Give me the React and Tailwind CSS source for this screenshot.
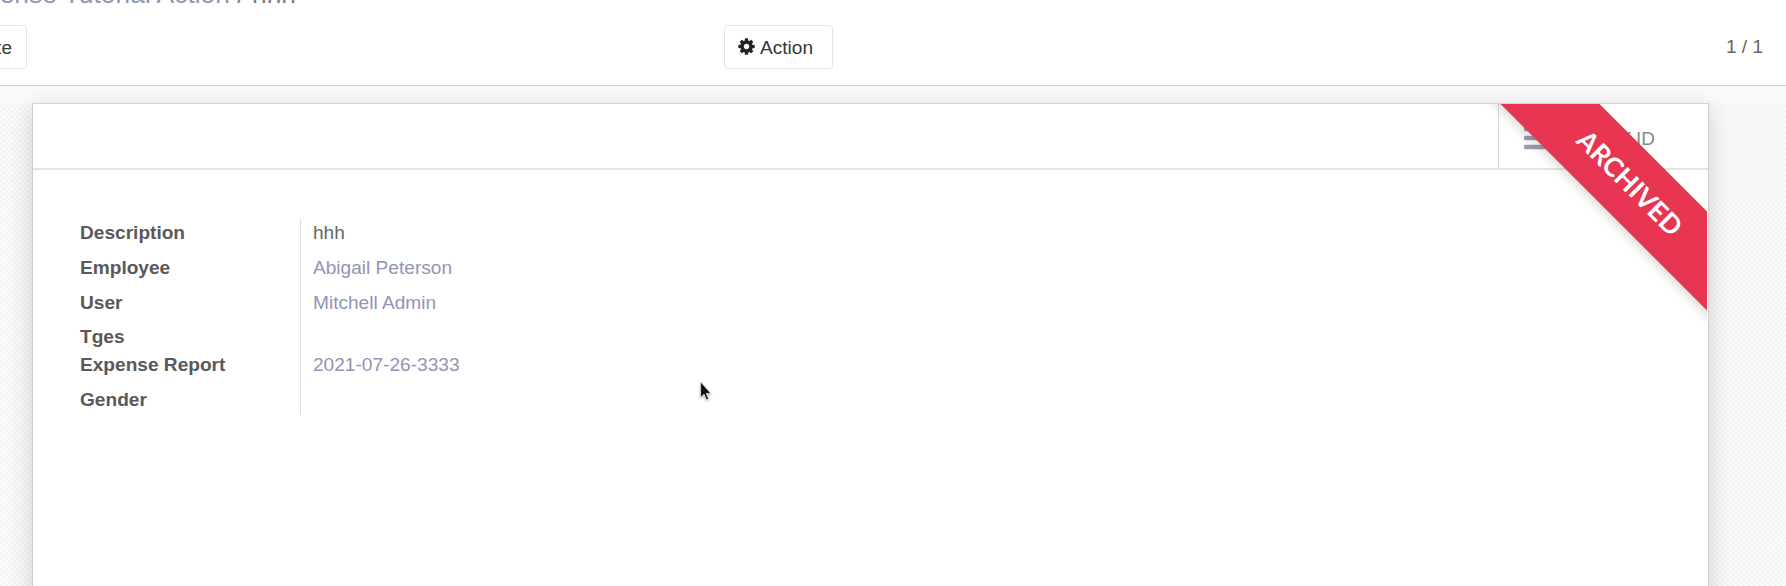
const fields = [
  { label: "Description", value: "hhh", row: "h-[35px]", tone: "text-[#666666]" },
  { label: "Employee", value: "Abigail Peterson", row: "h-[35px]", tone: "text-[#9194b4]" },
  { label: "User", value: "Mitchell Admin", row: "h-[34px]", tone: "text-[#9194b4]" },
  { label: "Tges", value: "", row: "h-[28px]", tone: "" },
  { label: "Expense Report", value: "2021-07-26-3333", row: "h-[35px]", tone: "text-[#9194b4]" },
  { label: "Gender", value: "", row: "h-[28px]", tone: "" },
];

function CogIcon() {
  return (
    <svg className="mr-[5px] size-[19px] -mt-[3px] -ml-px" viewBox="0 0 1792 1792" fill="#212529">
      <path d="M1152 896q0-106-75-181t-181-75-181 75-75 181 75 181 181 75 181-75 75-181zm512-109v222q0 12-8 23t-20 13l-185 28q-19 54-39 91 35 50 107 138 10 12 10 25t-9 23q-27 37-99 108t-94 71q-12 0-26-9l-138-108q-44 23-91 38-16 136-29 186-7 28-36 28h-222q-14 0-24.5-8.5t-11.5-21.5l-28-184q-49-16-90-37l-141 107q-10 9-25 9-14 0-25-11-126-114-165-168-7-10-7-23 0-12 8-23 15-21 51-66.5t54-70.5q-27-50-41-99l-183-27q-13-2-21-12.5t-8-23.5v-222q0-12 8-23t19-13l186-28q14-46 39-92-40-57-107-138-10-12-10-24 0-10 9-23 26-36 98.5-107.5t94.5-71.5q13 0 26 10l138 107q44-23 91-38 16-136 29-186 7-28 36-28h222q14 0 24.5 8.5t11.5 21.5l28 184q49 16 90 37l142-107q9-9 24-9 13 0 25 10 129 119 165 170 7 8 7 22 0 12-8 23-15 21-51 66.5t-54 70.5q26 50 41 98l183 28q13 2 21 12.5t8 23.5z" />
    </svg>
  );
}

function BarsIcon() {
  return (
    <svg className="mt-[4px] h-[24px] w-[24px]" viewBox="0 0 24 24" fill="#9a9cb2">
      <rect x="0" y="0.7" width="24" height="4.6" rx="1.2" />
      <rect x="0" y="9.7" width="24" height="4.6" rx="1.2" />
      <rect x="0" y="18.7" width="24" height="4.6" rx="1.2" />
    </svg>
  );
}

function ControlPanel() {
  return (
    <header className="relative z-10 h-[86px] shrink-0 overflow-hidden border-b border-[#cfcfcf] bg-white">
      <div className="-mt-[19px] flex h-[26px] w-[296px] justify-end whitespace-pre text-[26.4px] leading-[26px] text-[#9194b4]">
        <span>My Expense Tutorial Action</span>
        <span className="text-[#7d7d84]"> / hhh</span>
      </div>
      <div className="mt-[18px] grid h-[44px] grid-cols-[724px_1fr_auto] items-center">
        <button className="-ml-[60px] flex h-[44px] w-[87px] items-center justify-end rounded-[4px] border border-[#e2e5e8] pt-[2px] pr-[14px] text-[19.1px] text-[#31403f]">
          Create
        </button>
        <button className="flex h-[44px] w-[109px] items-center rounded-[4px] border border-[#e2e5e8] pt-[2px] pl-[13px] text-[19.1px] text-[#31373c]">
          <CogIcon />
          <span className="-ml-px">Action</span>
        </button>
        <div className="pr-[23px] text-[19px] text-[#666666]">1 / 1</div>
      </div>
    </header>
  );
}

function Ribbon() {
  return (
    <div className="pointer-events-none absolute top-0 right-px size-[240px] overflow-hidden">
      <div className="absolute top-[43px] -left-[39px] flex h-[70px] w-[400px] rotate-45 items-center justify-center bg-[#e83552] font-['Lato',sans-serif] text-[26.7px] font-bold text-white shadow-[0_5px_10px_rgba(0,0,0,0.12)]">
        <span className="translate-x-[2px] -translate-y-px">ARCHIVED</span>
      </div>
    </div>
  );
}

export default function App() {
  return (
    <div className="relative flex h-[586px] w-full flex-col overflow-hidden bg-white font-['Liberation_Sans',sans-serif]">
      <ControlPanel />
      <main className="relative flex flex-1 flex-col bg-[#fafafa] bg-[repeating-conic-gradient(#f4f4f4_0_25%,#fcfcfc_0_50%)] bg-size-[5.33px_5.33px]">
        <div className="h-[17px] shrink-0 bg-[#fafafa]" />
        <section className="relative mr-[77px] ml-[32px] h-[520px] border border-[#cfcfd1] border-t-[#d4d4d4] bg-white shadow-[0_6px_24px_rgba(0,0,0,0.17)]">
          <div className="flex h-[66px] justify-end border-b-2 border-[#e4e4e4]">
            <div className="flex w-[210px] items-center border-l border-[#d8d8d8] pl-[25px]">
              <BarsIcon />
              <span className="ml-auto pt-[6px] pr-[53px] text-[19px] text-[#888888]">TEST ID</span>
            </div>
          </div>
          <div className="mt-[49px] ml-[47px] flex">
            <dl className="w-[221px] border-r border-[#dddddd] text-[19.1px] font-bold text-[#595959]">
              {fields.map((f) => (
                <dt key={f.label} className={`${f.row} leading-[27px]`}>{f.label}</dt>
              ))}
            </dl>
            <dl className="pl-[12px] text-[19.1px]">
              {fields.map((f) => (
                <dd key={f.label} className={`${f.row} ${f.tone} leading-[27px]`}>{f.value}</dd>
              ))}
            </dl>
          </div>
          <Ribbon />
        </section>
      </main>
      <svg className="absolute top-[380px] left-[699px] z-20 h-[23px] w-[15px] drop-shadow-[0_1px_1px_rgba(0,0,0,0.35)]" viewBox="0 0 14 21">
        <path d="M1.5 1.5v14.5l3.2-3 2.3 5.2 2-.9-2.3-5H11z" fill="#111" stroke="#fff" strokeWidth="0.6" />
      </svg>
    </div>
  );
}
